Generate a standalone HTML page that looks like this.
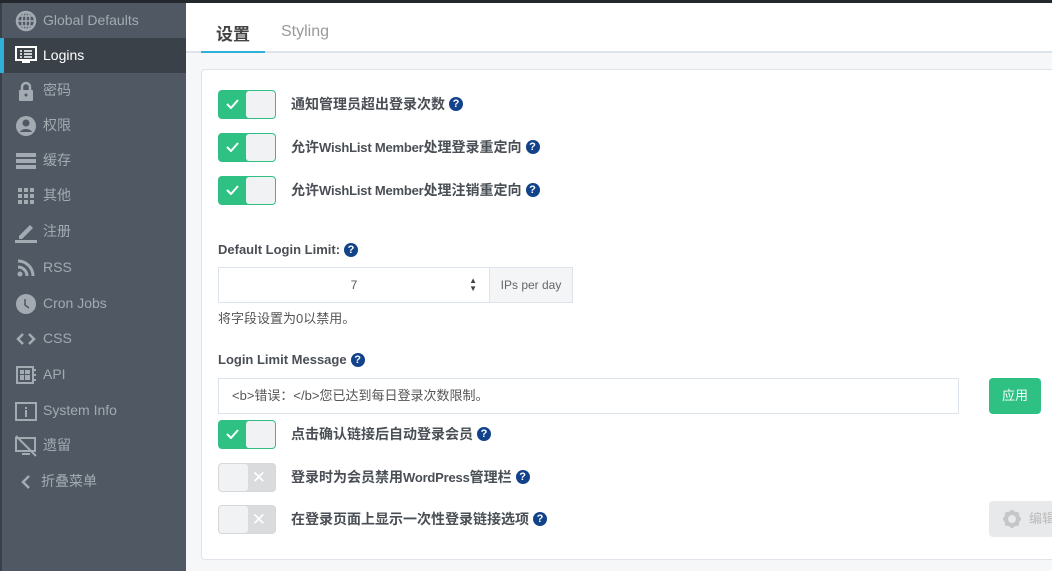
<!DOCTYPE html>
<html><head><meta charset="utf-8"><style>
*{box-sizing:border-box;margin:0;padding:0}
body{width:1052px;height:571px;overflow:hidden;background:#fff;font-family:"Liberation Sans","Noto Sans CJK SC",sans-serif;position:relative}
.top{position:absolute;left:0;top:0;width:1052px;height:3px;background:#23282d}
.side{position:absolute;left:0;top:3px;width:186px;height:568px;background:#4f5863;border-left:2px solid #3a4047}
.it{position:absolute;left:0;width:184px;height:35px;color:#a4aab1;font-size:14px;line-height:35px;padding-left:41px}
.it svg{position:absolute;left:13px;top:7px}
.act{background:#3b4149;color:#fff}
.act:before{content:"";position:absolute;left:-2px;top:0;width:4px;height:35px;background:#2eb0d8}
.main{position:absolute;left:186px;top:3px;right:0;bottom:0;background:#f5f7f9}
.tabs{position:absolute;left:0;top:0;right:0;height:50px;background:#fff;border-bottom:2px solid #dde3ea}
.tab{position:absolute;top:20px;font-size:17px}
.card{position:absolute;left:15px;top:66px;width:900px;height:491px;background:#fff;border:1px solid #dfe4ea;border-radius:4px}
.tg{position:absolute;left:16px;width:58px;height:29px;border-radius:4px}
.on{background:#2fc083;border:1px solid #2fc083}
.on:after{content:"";position:absolute;right:0;top:0;width:29px;height:27px;background:#f1f2f3;border-radius:3px}
.on b{position:absolute;left:7px;top:5px;width:13px;height:10px}
.off{background:#d9dbdd;border:1px solid #d5d7d9}
.off:after{content:"";position:absolute;left:0;top:0;width:29px;height:27px;background:#f1f2f3;border-radius:3px}
.off i{position:absolute;right:9px;top:4px;color:#fff;font-style:normal;font-size:17px}
.lb{position:absolute;left:89px;font-size:14px;line-height:16px;font-weight:bold;color:#4a4f55;white-space:nowrap}
.lb s{text-decoration:none;font-size:13px;letter-spacing:-0.2px}
.q{display:inline-block;width:14px;height:14px;border-radius:7px;background:#12428a;color:#fff;font-size:11px;line-height:14px;text-align:center;vertical-align:top;margin-top:1px;margin-left:4px;font-weight:bold}
</style></head><body>
<div class="top"></div>
<div class="side">
<div class="it" style="top:0">Global Defaults<svg width="22" height="22" viewBox="0 0 22 22"><circle cx="11" cy="11" r="9" fill="none" stroke="#a4aab1" stroke-width="2.5"/><path d="M2 11h18M11 2v18M4 6h14M4 16h14" stroke="#a4aab1" stroke-width="1.5"/><ellipse cx="11" cy="11" rx="4" ry="9" fill="none" stroke="#a4aab1" stroke-width="1.5"/></svg></div>
<div class="it act" style="top:35px">Logins<svg width="22" height="20" viewBox="0 0 22 20"><rect x="1" y="2" width="20" height="13" fill="none" stroke="#fff" stroke-width="2"/><path d="M5 6h2M9 6h8M5 9h2M9 9h8M5 12h2M9 12h8" stroke="#fff" stroke-width="1.5"/><path d="M7 15h8v3H7z" fill="#fff"/></svg></div>
<div class="it" style="top:70px">密码<svg width="22" height="22" viewBox="0 0 22 22"><path d="M7 10V7a4 4 0 018 0v3" fill="none" stroke="#a4aab1" stroke-width="2.5"/><rect x="4" y="10" width="14" height="11" rx="1" fill="#a4aab1"/><circle cx="11" cy="15" r="1.5" fill="#4f5863"/></svg></div>
<div class="it" style="top:105px">权限<svg width="22" height="22" viewBox="0 0 22 22"><circle cx="11" cy="11" r="10" fill="#a4aab1"/><circle cx="11" cy="8" r="3.5" fill="#4f5863"/><path d="M5 17c2-4 10-4 12 0" fill="#4f5863"/></svg></div>
<div class="it" style="top:140px">缓存<svg width="22" height="22" viewBox="0 0 22 22"><path d="M1 3h20v4H1zM1 9h20v4H1zM1 15h20v4H1z" fill="#a4aab1"/></svg></div>
<div class="it" style="top:175px">其他<svg width="22" height="22" viewBox="0 0 22 22" fill="#a4aab1"><rect x="3" y="3" width="4" height="4"/><rect x="9" y="3" width="4" height="4"/><rect x="15" y="3" width="4" height="4"/><rect x="3" y="9" width="4" height="4"/><rect x="9" y="9" width="4" height="4"/><rect x="15" y="9" width="4" height="4"/><rect x="3" y="15" width="4" height="4"/><rect x="9" y="15" width="4" height="4"/><rect x="15" y="15" width="4" height="4"/></svg></div>
<div class="it" style="top:211px">注册<svg width="22" height="22" viewBox="0 0 22 22"><path d="M4 15L15 4l3 3L7 18H4z" fill="#a4aab1"/><rect x="0" y="19" width="22" height="3" fill="#a4aab1"/></svg></div>
<div class="it" style="top:247px">RSS<svg width="22" height="22" viewBox="0 0 22 22"><circle cx="5" cy="17" r="2.5" fill="#a4aab1"/><path d="M3 10a9 9 0 019 9M3 4a15 15 0 0115 15" fill="none" stroke="#a4aab1" stroke-width="3"/></svg></div>
<div class="it" style="top:283px">Cron Jobs<svg width="22" height="22" viewBox="0 0 22 22"><circle cx="11" cy="11" r="10" fill="#a4aab1"/><path d="M10 6v6l4 3" fill="none" stroke="#4f5863" stroke-width="1.5"/></svg></div>
<div class="it" style="top:318px">CSS<svg width="22" height="22" viewBox="0 0 22 22"><path d="M8 6l-5 5 5 5M14 6l5 5-5 5" fill="none" stroke="#a4aab1" stroke-width="2.5"/></svg></div>
<div class="it" style="top:354px">API<svg width="22" height="22" viewBox="0 0 22 22"><rect x="2" y="3" width="16" height="16" fill="none" stroke="#a4aab1" stroke-width="2"/><rect x="5" y="6" width="4" height="4" fill="#a4aab1"/><rect x="10" y="6" width="5" height="4" fill="#a4aab1"/><rect x="5" y="11" width="4" height="5" fill="#a4aab1"/><rect x="10" y="11" width="5" height="5" fill="#a4aab1"/><path d="M19 6h2M19 11h2M19 16h2" stroke="#a4aab1" stroke-width="2"/></svg></div>
<div class="it" style="top:390px">System Info<svg width="22" height="22" viewBox="0 0 22 22"><rect x="1" y="3" width="20" height="17" fill="none" stroke="#a4aab1" stroke-width="2"/><rect x="10" y="7" width="2" height="2" fill="#a4aab1"/><rect x="10" y="10" width="2" height="7" fill="#a4aab1"/></svg></div>
<div class="it" style="top:425px">遗留<svg width="22" height="22" viewBox="0 0 22 22"><rect x="1" y="3" width="19" height="13" fill="none" stroke="#a4aab1" stroke-width="2"/><path d="M7 19h8M1 1l20 20" stroke="#a4aab1" stroke-width="2"/></svg></div>
<div class="it" style="top:461px;padding-left:39px">折叠菜单<svg width="22" height="22" viewBox="0 0 22 22"><path d="M14 5l-6 6 6 6" fill="none" stroke="#a4aab1" stroke-width="2.5"/></svg></div>
</div>
<div class="main">
<div class="tabs">
<div class="tab" style="left:30px;top:17px;color:#444;font-weight:bold">设置</div>
<div style="position:absolute;left:15px;bottom:-2px;width:64px;height:2px;background:#2eb0d8"></div>
<div class="tab" style="left:95px;color:#999;font-size:16px;top:20px">Styling</div>
</div>
<div class="card">
<div class="tg on" style="top:20px"><b><svg width="13" height="10"><path d="M1 5l4 4 7-8" fill="none" stroke="#fff" stroke-width="2"/></svg></b></div>
<div class="lb" style="top:26px">通知管理员超出登录次数<span class="q">?</span></div>
<div class="tg on" style="top:63px"><b><svg width="13" height="10"><path d="M1 5l4 4 7-8" fill="none" stroke="#fff" stroke-width="2"/></svg></b></div>
<div class="lb" style="top:69px">允许<s>WishList Member</s>处理登录重定向<span class="q">?</span></div>
<div class="tg on" style="top:106px"><b><svg width="13" height="10"><path d="M1 5l4 4 7-8" fill="none" stroke="#fff" stroke-width="2"/></svg></b></div>
<div class="lb" style="top:112px">允许<s>WishList Member</s>处理注销重定向<span class="q">?</span></div>
<div class="lb" style="left:16px;top:172px;font-size:13px">Default Login Limit:<span class="q">?</span></div>
<div style="position:absolute;left:16px;top:197px;width:272px;height:36px;border:1px solid #dde3ea;font-size:12px;color:#555;text-align:center;line-height:34px">7<span style="position:absolute;right:12px;top:9px;font-size:8px;line-height:8px;color:#444">▲<br>▼</span></div>
<div style="position:absolute;left:287px;top:197px;width:84px;height:36px;border:1px solid #dde3ea;background:#f3f5f7;font-size:12px;color:#666;text-align:center;line-height:34px">IPs per day</div>
<div style="position:absolute;left:16px;top:238px;font-size:13px;color:#555">将字段设置为0以禁用。</div>
<div class="lb" style="left:16px;top:282px;font-size:13px">Login Limit Message<span class="q">?</span></div>
<div style="position:absolute;left:16px;top:308px;width:741px;height:36px;border:1px solid #dde3ea;font-size:13px;color:#555;line-height:34px;padding-left:13px">&lt;b&gt;错误：&lt;/b&gt;您已达到每日登录次数限制。</div>
<div style="position:absolute;left:787px;top:308px;width:52px;height:36px;background:#2fc083;border-radius:4px;color:#fff;font-size:13px;text-align:center;line-height:36px">应用</div>
<div class="tg on" style="top:350px"><b><svg width="13" height="10"><path d="M1 5l4 4 7-8" fill="none" stroke="#fff" stroke-width="2"/></svg></b></div>
<div class="lb" style="top:356px">点击确认链接后自动登录会员<span class="q">?</span></div>
<div class="tg off" style="top:393px"><i>✕</i></div>
<div class="lb" style="top:399px">登录时为会员禁用<s>WordPress</s>管理栏<span class="q">?</span></div>
<div class="tg off" style="top:435px"><i>✕</i></div>
<div class="lb" style="top:441px">在登录页面上显示一次性登录链接选项<span class="q">?</span></div>
<div style="position:absolute;left:787px;top:431px;width:80px;height:36px;background:#e8e9ea;border-radius:4px;color:#bbb;font-size:13px;line-height:36px;padding-left:40px">编辑<svg style="position:absolute;left:13px;top:8px" width="20" height="20" viewBox="0 0 20 20"><circle cx="10" cy="10" r="6" fill="none" stroke="#c4c6c8" stroke-width="4"/><path d="M10 1v4M10 15v4M1 10h4M15 10h4M3.6 3.6l3 3M13.4 13.4l3 3M3.6 16.4l3-3M13.4 6.6l3-3" stroke="#c4c6c8" stroke-width="3"/></svg></div>
</div>
</div>
</body></html>
